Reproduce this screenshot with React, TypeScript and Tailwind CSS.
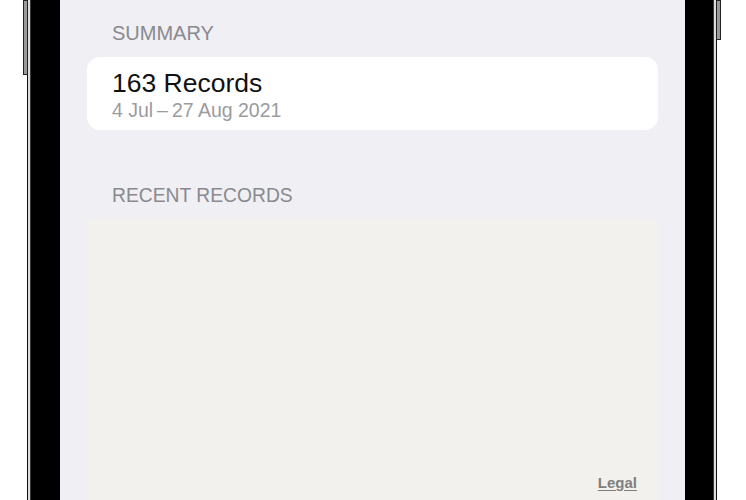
const App = () => {
  return (
    <div className="relative w-[746px] h-[500px] overflow-hidden bg-white flex font-['Liberation_Sans',Arial,sans-serif]">
      {/* side buttons */}
      <div className="absolute left-[23px] top-0 w-[5px] h-[75px] bg-[#9a9a9a] border border-[#222]" />
      <div className="absolute left-[716px] top-0 w-[5px] h-[40px] bg-[#9a9a9a] border border-[#222]" />

      {/* phone frame */}
      <div className="ml-[27px] w-[690px] h-full border-x border-[#111] bg-[#dcdcdc] px-[2px] flex">
        <div className="flex-1 bg-black border-x border-[#3a3a3a] pl-[29px] pr-[28px] flex">
          {/* screen */}
          <div className="flex-1 bg-[#efeff4] flex flex-col px-[27px] pt-[21px]">
            <div className="pl-[25px] text-[20px] leading-6 text-[#8a8a8e]">SUMMARY</div>

            <div className="mt-[12px] h-[73px] bg-white rounded-[13px] pl-[25px] pt-[13px]">
              <div className="text-[26.5px] leading-[26px] text-[#111]">163 Records</div>
              <div className="mt-[4px] text-[19.5px] leading-5 text-[#9b9b9f]">4 Jul{'\u2009'}–{'\u2009'}27 Aug 2021</div>
            </div>

            <div className="mt-[54px] pl-[25px] text-[19.3px] leading-6 text-[#8a8a8e]">RECENT RECORDS</div>

            <div className="mt-[11px] flex-1 bg-[#f2f1ed] rounded-t-[4px] flex flex-col justify-end items-end pr-[21px] pb-[7px]">
              <span className="text-[15px] leading-5 font-semibold text-[#7f7f7f] underline underline-offset-2">Legal</span>
            </div>
          </div>
        </div>
      </div>
    </div>
  );
};

export default App;
